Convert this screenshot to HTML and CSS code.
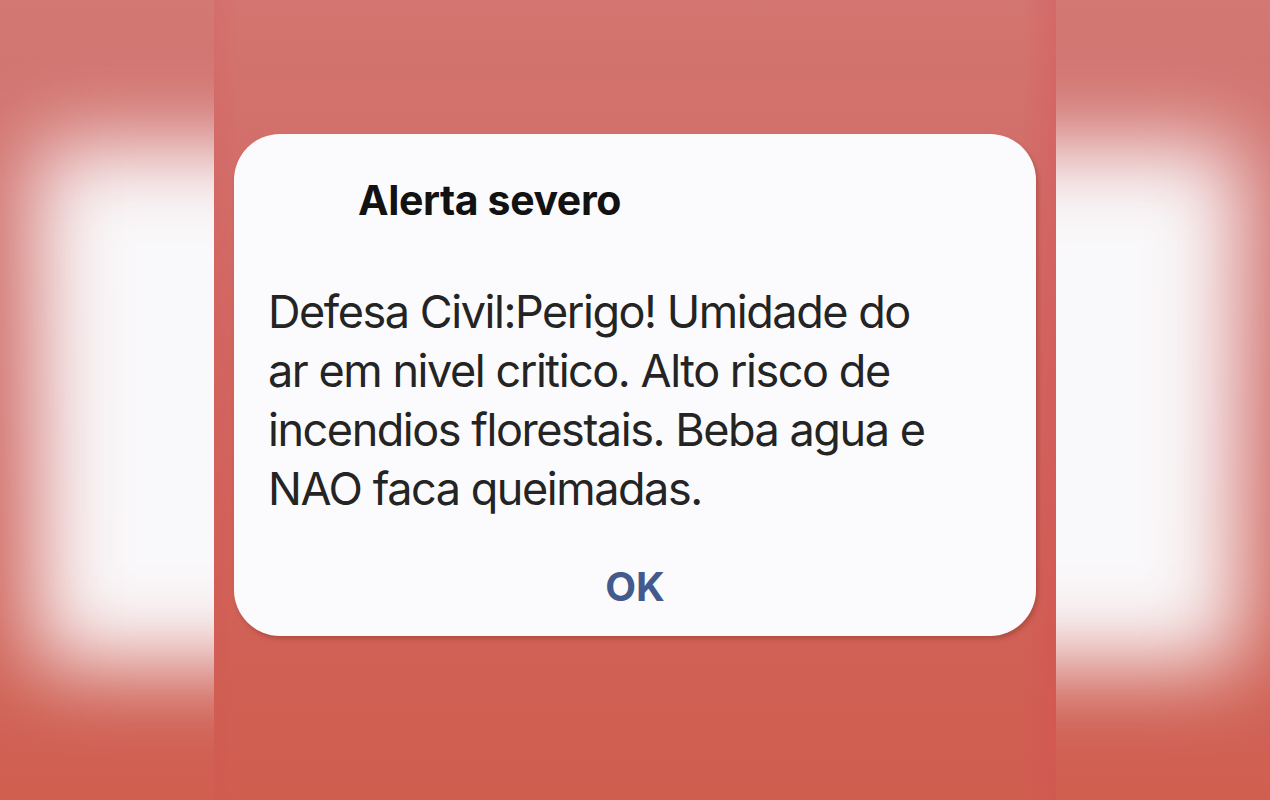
FILE: index.html
```html
<!DOCTYPE html>
<html lang="pt">
<head>
<meta charset="utf-8">
<title>Alerta severo</title>
<link rel="stylesheet" href="styles.css">
</head>
<body>
<div class="page">
  <div class="side side-left"><div class="glow"></div></div>
  <main class="center">
    <section class="dialog">
      <h1 class="title">Alerta severo</h1>
      <p class="message">Defesa Civil:Perigo! Umidade do<br>ar em nivel critico. Alto risco de<br>incendios florestais. Beba agua e<br>NAO faca queimadas.</p>
      <div class="actions"><button class="ok">OK</button></div>
    </section>
  </main>
  <div class="side side-right"><div class="glow"></div></div>
</div>
</body>
</html>
```
FILE: styles.css
```css
* { box-sizing: border-box; }
html, body { margin: 0; padding: 0; }
body {
  width: 1270px;
  height: 800px;
  overflow: hidden;
  font-family: "Inter", "Roboto", sans-serif;
}
.page {
  display: flex;
  width: 1270px;
  height: 800px;
}
.side {
  position: relative;
  width: 214px;
  height: 800px;
  overflow: hidden;
  background: linear-gradient(180deg, #d37873 0%, #d06a66 50%, #d05f50 100%);
}
.side .glow {
  position: absolute;
  top: 145px;
  height: 520px;
  background: #f9f8fa;
  filter: blur(42px);
}
.side-left .glow { left: 35px; width: 300px; }
.side-right .glow { left: -100px; width: 285px; }
.center {
  width: 842px;
  height: 800px;
  padding: 134px 20px 0;
  background:
    linear-gradient(90deg, rgba(214,70,80,0.12) 0%, rgba(214,70,80,0) 3%, rgba(214,70,80,0) 96%, rgba(214,70,80,0.25) 100%),
    linear-gradient(180deg, #d37570 0%, #d2655f 50%, #d05e4f 100%);
}
.dialog {
  width: 802px;
  height: 502px;
  background: #fbfbfd;
  border-radius: 46px;
  box-shadow: 2px 3px 4px rgba(120, 40, 30, 0.35);
  padding: 41px 34px 25px;
  display: flex;
  flex-direction: column;
}
.title {
  margin: 0 0 57px 90px;
  font-size: 41px;
  line-height: 50px;
  font-weight: 700;
  color: #121212;
  letter-spacing: -0.4px;
}
.message {
  margin: 0 0 45px;
  font-size: 45px;
  line-height: 59px;
  font-weight: 400;
  color: #242424;
  letter-spacing: -1.45px;
}
.actions {
  display: flex;
  justify-content: center;
}
.ok {
  border: none;
  background: none;
  padding: 0;
  font-family: inherit;
  font-size: 40px;
  line-height: 48px;
  font-weight: 700;
  color: #435b8c;
}
```
